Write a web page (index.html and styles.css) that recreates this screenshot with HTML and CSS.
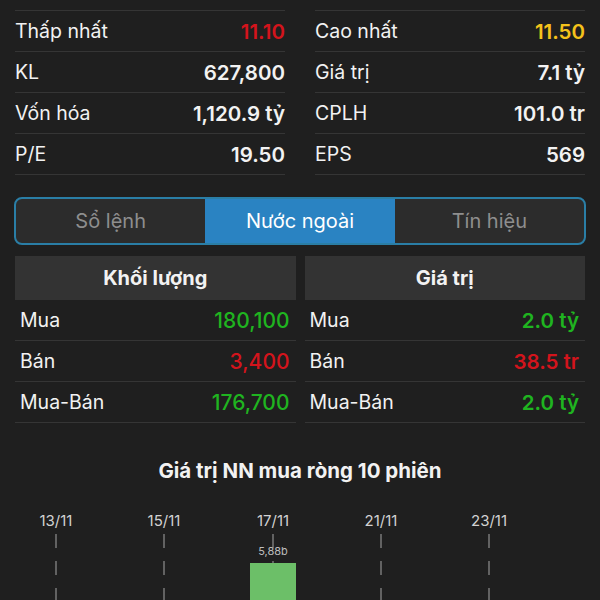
FILE: index.html
```html
<!DOCTYPE html>
<html lang="vi">
<head>
  <meta charset="UTF-8">
  <title>Nước ngoài</title>
  <meta name="viewport" content="width=device-width, initial-scale=1">
  <link rel="stylesheet" href="styles.css">
</head>
<body>
  <div class="stats">
    <div class="stat"><span>Thấp nhất</span><b class="red">11.10</b></div>
    <div class="stat"><span>Cao nhất</span><b class="yellow">11.50</b></div>
    <div class="stat"><span>KL</span><b>627,800</b></div>
    <div class="stat"><span>Giá trị</span><b>7.1 tỷ</b></div>
    <div class="stat"><span>Vốn hóa</span><b>1,120.9 tỷ</b></div>
    <div class="stat"><span>CPLH</span><b>101.0 tr</b></div>
    <div class="stat"><span>P/E</span><b>19.50</b></div>
    <div class="stat"><span>EPS</span><b>569</b></div>
  </div>

  <div class="tabs">
    <div class="tab">Sổ lệnh</div>
    <div class="tab active">Nước ngoài</div>
    <div class="tab">Tín hiệu</div>
  </div>

  <div class="foreign">
    <div class="col">
      <div class="col-head">Khối lượng</div>
      <div class="row"><span>Mua</span><span class="num green">180,100</span></div>
      <div class="row"><span>Bán</span><span class="num red">3,400</span></div>
      <div class="row"><span>Mua-Bán</span><span class="num green">176,700</span></div>
    </div>
    <div class="col">
      <div class="col-head">Giá trị</div>
      <div class="row"><span>Mua</span><span class="num green bold">2.0 tỷ</span></div>
      <div class="row"><span>Bán</span><span class="num red bold">38.5 tr</span></div>
      <div class="row"><span>Mua-Bán</span><span class="num green bold">2.0 tỷ</span></div>
    </div>
  </div>

  <h3 class="chart-title">Giá trị NN mua ròng 10 phiên</h3>

  <svg class="chart" width="570" height="110" viewBox="0 0 570 110">
    <g class="grid">
      <line x1="41" y1="44" x2="41" y2="110"/>
      <line x1="149" y1="44" x2="149" y2="110"/>
      <line x1="258" y1="44" x2="258" y2="110"/>
      <line x1="366" y1="44" x2="366" y2="110"/>
      <line x1="474" y1="44" x2="474" y2="110"/>
    </g>
    <g class="dates">
      <text x="41" y="36">13/11</text>
      <text x="149" y="36">15/11</text>
      <text x="258" y="36">17/11</text>
      <text x="366" y="36">21/11</text>
      <text x="474" y="36">23/11</text>
    </g>
    <rect class="bar" x="235" y="73" width="46" height="40"/>
    <text class="bar-label" x="258" y="65">5,88b</text>
  </svg>
</body>
</html>
```

FILE: styles.css
```css
body {
  margin: 0;
  padding: 10px 15px 0;
  background-color: #1f1f1f;
  color: #f2f2f2;
  font-family: 'Inter', 'Roboto', sans-serif;
  font-size: 19.5px;
  overflow: hidden;
}

.red { color: #d3141c; }
.yellow { color: #f4c21b; }
.green { color: #1fb420; }

.stats {
  display: grid;
  grid-template-columns: 1fr 1fr;
  column-gap: 30px;
}

.stat {
  display: flex;
  justify-content: space-between;
  align-items: center;
  height: 40px;
  border-bottom: 1px solid #353535;
}

.stat:nth-child(-n+2) {
  border-top: 1px solid #353535;
}

.stat b {
  font-size: 20.5px;
  font-weight: 600;
}

.tabs {
  display: grid;
  grid-template-columns: repeat(3, 1fr);
  margin: 22px -1px 0;
  height: 44px;
  border: 2px solid #2a7ea6;
  border-radius: 8px;
  overflow: hidden;
  background-color: #2c2c2c;
  font-size: 20px;
}

.tab {
  display: flex;
  align-items: center;
  justify-content: center;
  color: #8e8e8e;
}

.tab.active {
  background-color: #2a83c2;
  color: #ffffff;
}

.foreign {
  display: grid;
  grid-template-columns: 1fr 1fr;
  column-gap: 9px;
  margin-top: 11px;
}

.col-head {
  height: 44px;
  display: flex;
  align-items: center;
  justify-content: center;
  background-color: #333333;
  font-size: 20px;
  font-weight: 700;
}

.row {
  display: flex;
  justify-content: space-between;
  align-items: center;
  height: 40px;
  padding: 0 6px 0 5px;
  border-bottom: 1px solid #353535;
}

.row .num {
  font-size: 21px;
  font-weight: 500;
}

.row .bold {
  font-size: 20.5px;
  font-weight: 600;
}

.chart-title {
  margin: 35px 0 0;
  text-align: center;
  font-size: 20.5px;
  font-weight: 700;
  line-height: 26px;
}

.chart {
  display: block;
  margin-top: 6px;
}

.grid line {
  stroke: #7a7a7a;
  stroke-width: 1.5;
  stroke-dasharray: 14 13;
}

.dates text {
  fill: #d2d2d2;
  font-size: 15px;
  text-anchor: middle;
}

.bar {
  fill: #6cbf68;
}

.bar-label {
  fill: #bdbdbd;
  font-size: 11px;
  text-anchor: middle;
}
```
